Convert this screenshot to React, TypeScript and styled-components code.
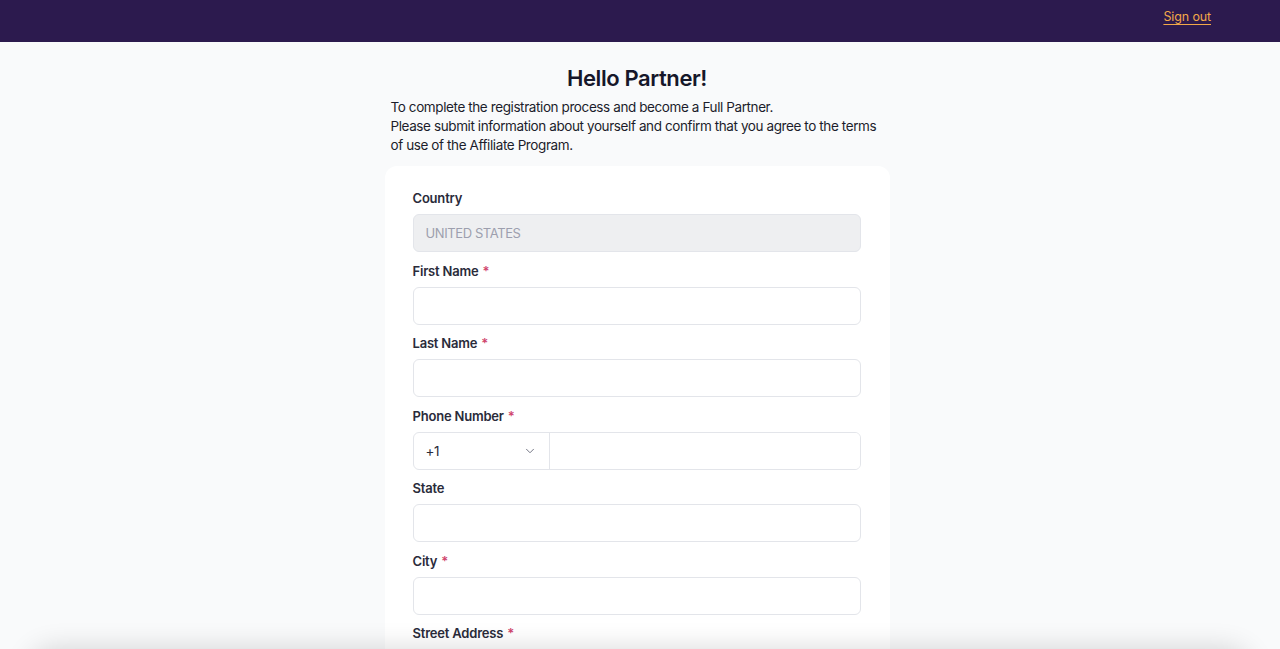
import styled, { createGlobalStyle } from "styled-components";
import { ChevronDown } from "lucide-react";

const GlobalStyle = createGlobalStyle`
  * {
    box-sizing: border-box;
  }
  body {
    margin: 0;
    background: #f9fafb;
    font-family: Inter, "Noto Sans", sans-serif;
    letter-spacing: -0.025em;
    color: #1c1d2b;
  }
`;

const Header = styled.header`
  height: 42px;
  background: #2c1a4e;
  display: flex;
  justify-content: flex-end;
  align-items: center;
  padding: 0 69px 10px 0;
`;

const SignOut = styled.a`
  color: #f2a849;
  font-size: 12.5px;
  letter-spacing: -0.01em;
  text-decoration: underline;
  text-underline-offset: 3px;
  cursor: pointer;
`;

const Main = styled.main`
  width: 505px;
  margin: 0 auto;
  padding: 22px 0 40px;
  transform: translateX(-3px);
`;

const Title = styled.h1`
  margin: 0 0 6px;
  font-size: 22px;
  font-weight: 600;
  line-height: 28px;
  text-align: center;
  color: #16172a;
`;

const Intro = styled.p`
  margin: 0 0 11px;
  padding-left: 6px;
  font-size: 13.5px;
  line-height: 19px;
  color: #1c1d2b;
`;

const Card = styled.div`
  background: #fff;
  border-radius: 12px;
  padding: 23px 29px 30px 28px;
  display: flex;
  flex-direction: column;
  gap: 9.5px;
`;

const Field = styled.div`
  display: flex;
  flex-direction: column;
`;

const Label = styled.label`
  font-size: 13px;
  font-weight: 600;
  line-height: 18px;
  margin-bottom: 7px;
  letter-spacing: -0.015em;
  color: #2a2b3a;
`;

const Star = styled.span`
  color: #d0456d;
  margin-left: 4px;
`;

const Input = styled.input<{ $disabled?: boolean }>`
  height: 38px;
  width: 100%;
  border: 1px solid #e3e5ea;
  border-radius: 6px;
  padding: 0 12px;
  font-family: inherit;
  font-size: 13px;
  letter-spacing: inherit;
  background: ${(p) => (p.$disabled ? "#eeeff1" : "#fff")};
  color: ${(p) => (p.$disabled ? "#9d9fae" : "#1c1d2b")};
  outline: none;
`;

const PhoneGroup = styled.div`
  display: flex;
  height: 38px;
  border: 1px solid #e3e5ea;
  border-radius: 6px;
  overflow: hidden;
`;

const CodeSelect = styled.div`
  width: 136px;
  display: flex;
  align-items: center;
  justify-content: space-between;
  padding: 0 12px 0 12px;
  border-right: 1px solid #e3e5ea;
  font-size: 13.5px;
  color: #2a2b3a;
`;

const PhoneInput = styled.input`
  flex: 1;
  border: none;
  outline: none;
  font-family: inherit;
  font-size: 13px;
  padding: 0 12px;
`;

const BottomShade = styled.div`
  position: fixed;
  left: 30px;
  right: 30px;
  bottom: -50px;
  height: 50px;
  border-radius: 24px;
  background: #fff;
  box-shadow: 0 0 28px rgba(0, 0, 0, 0.16);
`;

const fields = [
  { label: "First Name", required: true },
  { label: "Last Name", required: true },
];

const afterPhone = [
  { label: "State", required: false },
  { label: "City", required: true },
  { label: "Street Address", required: true },
  { label: "ZIP Code", required: true },
];

function App() {
  return (
    <>
      <GlobalStyle />
      <Header>
        <SignOut>Sign out</SignOut>
      </Header>
      <Main>
        <Title>Hello Partner!</Title>
        <Intro>
          To complete the registration process and become a Full Partner.
          <br />
          Please submit information about yourself and confirm that you agree
          to the terms of use of the Affiliate Program.
        </Intro>
        <Card>
          <Field>
            <Label>Country</Label>
            <Input $disabled value="UNITED STATES" readOnly />
          </Field>
          {fields.map((f) => (
            <Field key={f.label}>
              <Label>
                {f.label}
                {f.required && <Star>*</Star>}
              </Label>
              <Input />
            </Field>
          ))}
          <Field>
            <Label>
              Phone Number<Star>*</Star>
            </Label>
            <PhoneGroup>
              <CodeSelect>
                <span>+1</span>
                <ChevronDown size={14} color="#6b6d7c" strokeWidth={1.6} />
              </CodeSelect>
              <PhoneInput />
            </PhoneGroup>
          </Field>
          {afterPhone.map((f) => (
            <Field key={f.label}>
              <Label>
                {f.label}
                {f.required && <Star>*</Star>}
              </Label>
              <Input />
            </Field>
          ))}
        </Card>
      </Main>
      <BottomShade />
    </>
  );
}

export default App;
